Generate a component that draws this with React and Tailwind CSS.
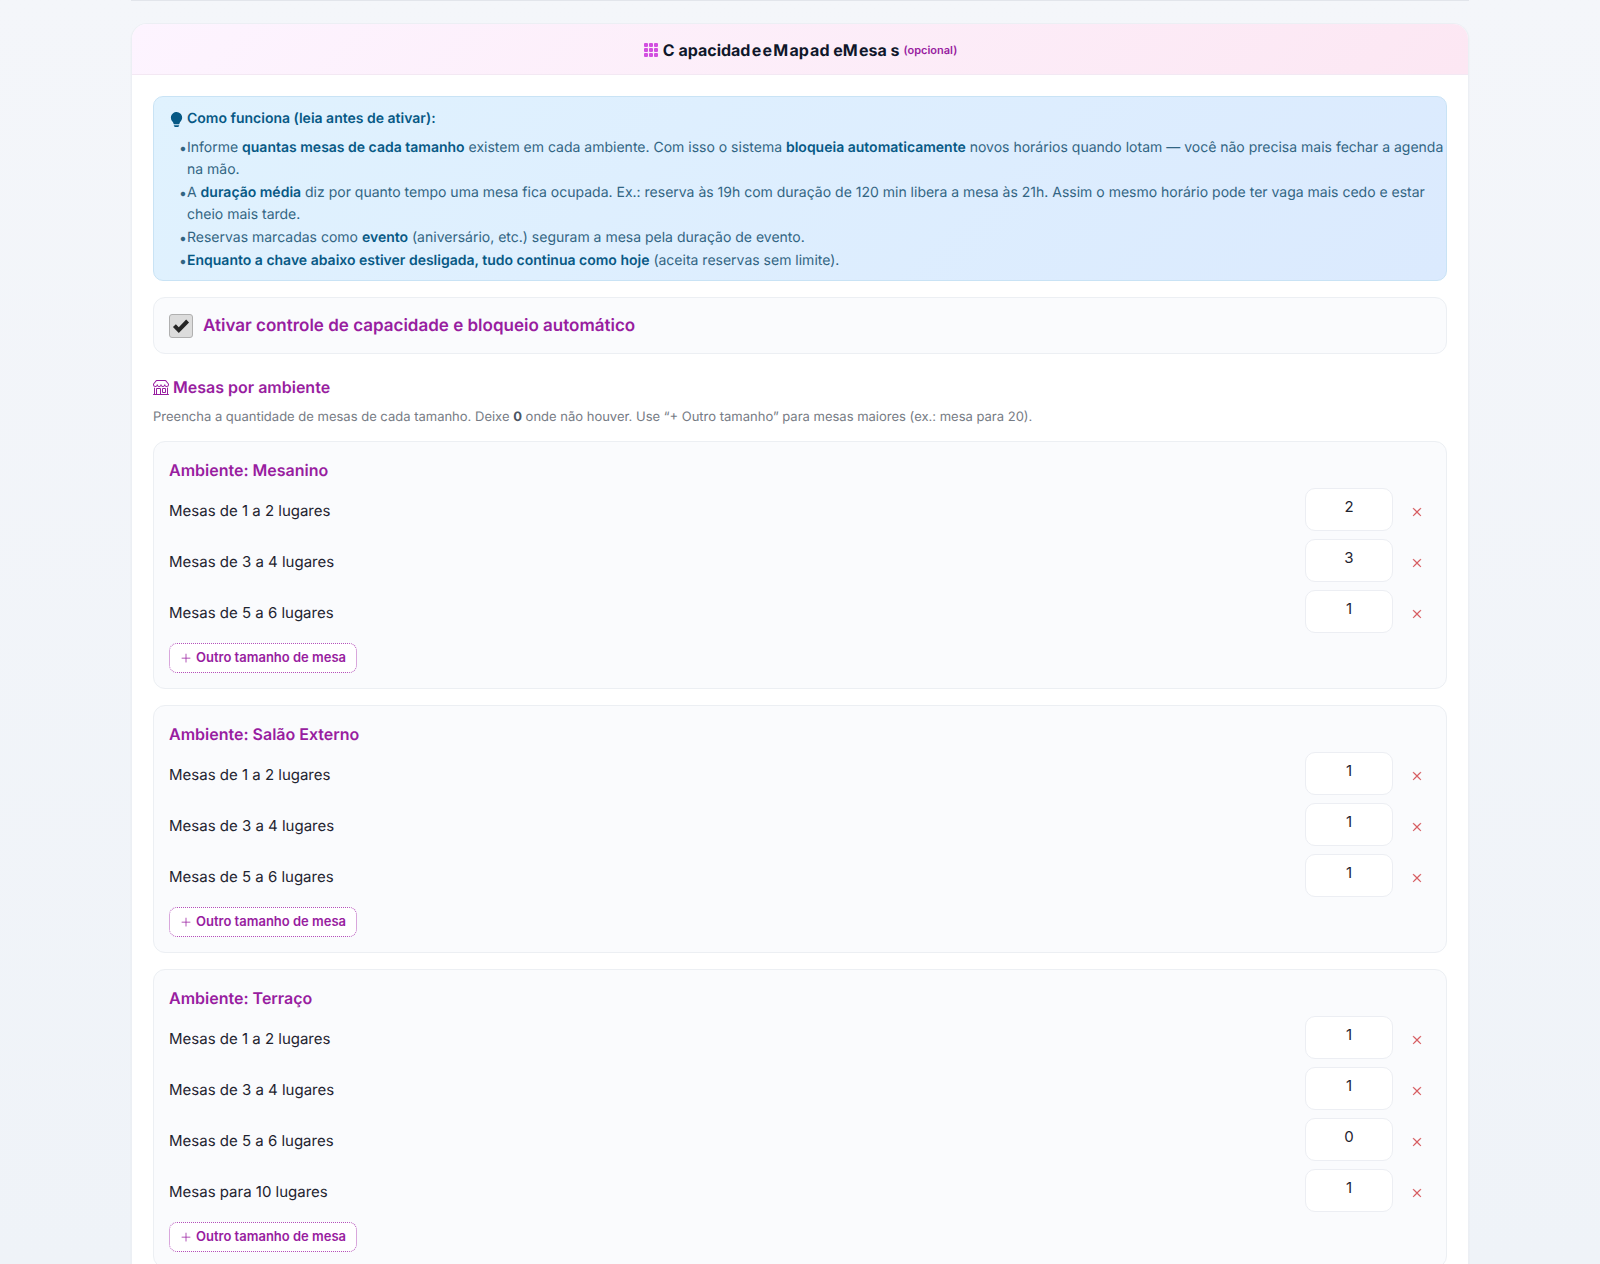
import React, { useState } from 'react'
import { BsGrid3X3GapFill, BsLightbulbFill, BsShop, BsPlusLg, BsXLg } from 'react-icons/bs'

const initialRooms = [
  {
    name: 'Mesanino',
    tables: [
      { label: 'Mesas de 1 a 2 lugares', qty: 2 },
      { label: 'Mesas de 3 a 4 lugares', qty: 3 },
      { label: 'Mesas de 5 a 6 lugares', qty: 1 },
    ],
  },
  {
    name: 'Salão Externo',
    tables: [
      { label: 'Mesas de 1 a 2 lugares', qty: 1 },
      { label: 'Mesas de 3 a 4 lugares', qty: 1 },
      { label: 'Mesas de 5 a 6 lugares', qty: 1 },
    ],
  },
  {
    name: 'Terraço',
    tables: [
      { label: 'Mesas de 1 a 2 lugares', qty: 1 },
      { label: 'Mesas de 3 a 4 lugares', qty: 1 },
      { label: 'Mesas de 5 a 6 lugares', qty: 0 },
      { label: 'Mesas para 10 lugares', qty: 1 },
    ],
  },
]

function InfoItem({ children }) {
  return (
    <li className="flex">
      <span className="h-[22px] w-2 shrink-0 leading-6" aria-hidden="true">•</span>
      <p>{children}</p>
    </li>
  )
}

function InfoBox() {
  return (
    <div className="rounded-[10px] border border-[#c9e3f5] bg-linear-135 from-[#e0f2fe] to-[#dbeafe] pl-[15px] pr-0.5 pt-2.5 pb-2 text-sm text-[#326583]">
      <p className="flex items-center gap-[3px] leading-6 font-semibold text-[#075985]">
        <BsLightbulbFill className="w-[15px] h-[15px]" />
        Como funciona (leia antes de ativar):
      </p>
      <ul className="mt-1.5 space-y-px pl-2.5 leading-[22px] [&_strong]:font-semibold [&_strong]:text-[#075985]">
        <InfoItem>
          Informe <strong>quantas mesas de cada tamanho</strong> existem em cada ambiente. Com isso o sistema{' '}
          <strong>bloqueia automaticamente</strong> novos horários quando lotam — você não precisa mais fechar a agenda na mão.
        </InfoItem>
        <InfoItem>
          A <strong>duração média</strong> diz por quanto tempo uma mesa fica ocupada. Ex.: reserva às 19h com duração de 120 min
          libera a mesa às 21h. Assim o mesmo horário pode ter vaga mais cedo e estar cheio mais tarde.
        </InfoItem>
        <InfoItem>
          Reservas marcadas como <strong>evento</strong> (aniversário, etc.) seguram a mesa pela duração de evento.
        </InfoItem>
        <InfoItem>
          <strong>Enquanto a chave abaixo estiver desligada, tudo continua como hoje</strong> (aceita reservas sem limite).
        </InfoItem>
      </ul>
    </div>
  )
}

function CapacityToggle() {
  const [enabled, setEnabled] = useState(true)

  return (
    <label className="mt-4 flex h-[57px] items-center gap-2.5 rounded-xl border border-[#eceff3] bg-[#fafbfd] px-[15px]">
      <span className="grid w-6 h-6">
        <input
          type="checkbox"
          checked={enabled}
          onChange={e => setEnabled(e.target.checked)}
          className="col-start-1 row-start-1 w-6 h-6 appearance-none rounded-[3px] border border-[#b0b0b0] bg-[#dcdcdc]"
        />
        {enabled && (
          <svg viewBox="0 0 24 24" className="pointer-events-none col-start-1 row-start-1 w-6 h-6" fill="none" stroke="#262626" strokeWidth="4">
            <path d="M5.4 11.6l4.4 4.6 8.8-9.2" />
          </svg>
        )}
      </span>
      <span className="pt-0.5 text-[17px] font-semibold text-[#981da0]">Ativar controle de capacidade e bloqueio automático</span>
    </label>
  )
}

function TableRow({ id, label, qty, onChange, onRemove }) {
  return (
    <div className="flex h-[51px] items-center">
      <label htmlFor={id} className="flex-1 text-[15px] text-[#1f2430]">{label}</label>
      <input
        id={id}
        type="number"
        value={qty}
        onChange={e => onChange(e.target.value)}
        className="mb-1 h-[43px] w-[88px] rounded-[10px] border border-[#eceef3] bg-white pb-1.5 text-center text-[15px] text-[#1f2430] [appearance:textfield] [&::-webkit-inner-spin-button]:appearance-none"
      />
      <button type="button" aria-label={`Remover ${label}`} onClick={onRemove} className="ml-2.5 flex w-7 h-7 items-center justify-center text-[#d24a4f]">
        <BsXLg className="w-2.5 h-2.5" strokeWidth="1" />
      </button>
    </div>
  )
}

function RoomCard({ room, index, onChange }) {
  const setTables = tables => onChange({ ...room, tables })

  return (
    <section className="rounded-xl border border-[#eceff3] bg-[#fafbfd] px-[15px] pt-4 pb-[15px]">
      <h4 className="text-base leading-6 font-semibold text-[#981da0]">Ambiente: {room.name}</h4>
      <div className="mt-1">
        {room.tables.map((table, i) => (
          <TableRow
            key={table.label}
            id={`mesa-${index}-${i}`}
            label={table.label}
            qty={table.qty}
            onChange={qty => setTables(room.tables.map((t, j) => (j === i ? { ...t, qty } : t)))}
            onRemove={() => setTables(room.tables.filter((_, j) => j !== i))}
          />
        ))}
      </div>
      <button
        type="button"
        onClick={() => setTables([...room.tables, { label: `Mesas para ${room.tables.length * 4} lugares`, qty: 0 }])}
        className="mt-1 flex h-[30px] items-center gap-1 rounded-lg border border-dotted border-[#b450ba] bg-white px-2.5 text-[13px] font-semibold text-[#981da0]"
      >
        <BsPlusLg className="w-3 h-3" />
        Outro tamanho de mesa
      </button>
    </section>
  )
}

export default function App() {
  const [rooms, setRooms] = useState(initialRooms)

  return (
    <div className="min-h-screen bg-linear-to-b from-[#f4f6fa] to-[#eff3f8] font-['Inter',sans-serif] [text-rendering:geometricPrecision]">
      <main className="mx-auto max-w-[1338px]">
        <div className="h-px bg-[#e2e5eb]"></div>

        <section className="mt-[22px] overflow-hidden rounded-t-2xl border border-b-0 border-[#eceff4] bg-white shadow-xs">
          <header className="flex h-[51px] items-center justify-center gap-1 border-b border-[#f3e8f3] bg-linear-135 from-[#fdf4ff] to-[#fce7f3] pt-0.5">
            <BsGrid3X3GapFill className="w-4 h-4 text-[#d24fe0]" />
            <h2 className="text-base font-bold text-[#0f172a]">
              C apacidad{'\u200A'}e{'\u200A'}e{'\u200A'}M{'\u200A'}ap{'\u200A'}ad eM{'\u200A'}esa s
            </h2>
            <small className="text-[11px] font-semibold text-[#981da0]">(opcional)</small>
          </header>

          <div className="px-[21px] pt-[21px]">
            <InfoBox />
            <CapacityToggle />

            <h3 className="mt-[21px] flex items-center gap-1 text-base font-semibold text-[#981da0]">
              <BsShop className="w-4 h-4" />
              Mesas por ambiente
            </h3>
            <p className="mt-2 text-[13px] leading-5 text-[#767b84]">
              Preencha a quantidade de mesas de cada tamanho. Deixe <strong className="text-[#4b5563]">0</strong> onde não houver. Use “+ Outro tamanho” para mesas maiores (ex.: mesa para 20).
            </p>

            <div className="mt-3.5 flex flex-col gap-4">
              {rooms.map((room, i) => (
                <RoomCard
                  key={room.name}
                  room={room}
                  index={i}
                  onChange={next => setRooms(rooms.map((r, j) => (j === i ? next : r)))}
                />
              ))}
            </div>
          </div>
        </section>
      </main>
    </div>
  )
}
